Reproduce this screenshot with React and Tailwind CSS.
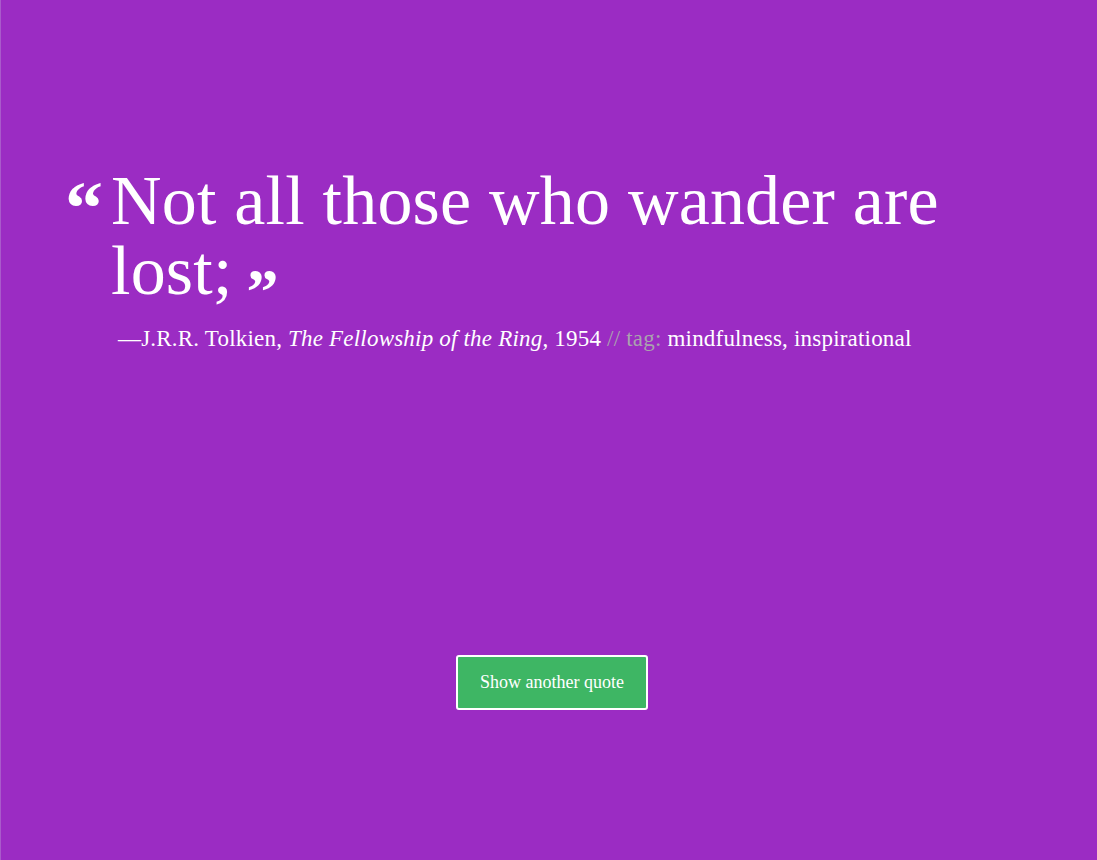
export default function App() {
  return (
    <div className="h-[860px] w-full bg-[#9b2cc3] text-white font-['Liberation_Serif',serif] flex flex-col border-l border-[#a95acb]">
      {/* Quote */}
      <div className="pt-[166px] pl-[64px] pr-[60px]">
        <div className="flex items-start">
          <span className="w-[46px] shrink-0 text-[76px] leading-[84px] font-bold">“</span>
          <p className="w-[860px] text-[70px] leading-[70px] tracking-[0.2px]">
            Not all those who wander are lost;
            <span className="ml-[14px] font-bold text-[64px] leading-[0] align-[-19px]">”</span>
          </p>
        </div>
        <p className="mt-[19px] pl-[53px] text-[23px] leading-[28px] tracking-[0.2px]">
          —J.R.R. Tolkien, <i>The Fellowship of the Ring</i>, 1954{" "}
          <span className="text-[#aaa2ae]">// tag:</span> mindfulness, inspirational
        </p>
      </div>

      {/* Button */}
      <div className="mt-[302px] pl-[6px] flex justify-center">
        <button className="w-[192px] h-[55px] bg-[#3eb664] border-2 border-white rounded-[3px] text-[18px] text-white">
          Show another quote
        </button>
      </div>
    </div>
  );
}
